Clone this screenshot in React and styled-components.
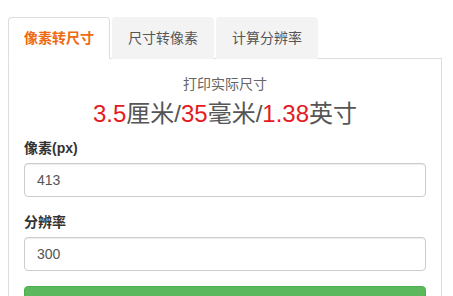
import React, { useState } from "react";
import styled, { createGlobalStyle } from "styled-components";

const GlobalStyle = createGlobalStyle`
  * { box-sizing: border-box; }
  body {
    margin: 0;
    background: #fff;
    font-family: "Liberation Sans", "Noto Sans CJK SC", Arial, sans-serif;
    font-size: 14px;
    line-height: 20px;
    color: #333;
  }
`;

const Page = styled.div`
  padding: 17px 11px 0 8px;
`;

const Tabs = styled.ul`
  display: flex;
  list-style: none;
  margin: 0;
  padding: 0;
  border-bottom: 1px solid #ddd;
`;

const TabItem = styled.li`
  margin: 0 2px -1px 0;
`;

const TabLink = styled.button`
  display: block;
  font: inherit;
  padding: 10px 15px;
  line-height: 20px;
  border: 1px solid ${(p) => (p.$active ? "#ddd" : "transparent")};
  border-bottom-color: ${(p) => (p.$active ? "#fff" : "transparent")};
  border-radius: 4px 4px 0 0;
  background: ${(p) => (p.$active ? "#fff" : "#f3f3f3")};
  color: ${(p) => (p.$active ? "#ee6a10" : "#555")};
  font-weight: ${(p) => (p.$active ? "bold" : "normal")};
  cursor: pointer;
`;

const Panel = styled.div`
  border: 1px solid #ddd;
  border-top: none;
  padding: 15px 15px 0;
  height: 238px;
`;

const Caption = styled.div`
  text-align: center;
  color: #666;
  margin-bottom: 3px;
`;

const Result = styled.div`
  text-align: center;
  font-size: 24px;
  line-height: 34px;
  color: #555;
  margin-bottom: 7px;
`;

const Num = styled.span`
  color: #e31b23;
`;

const FormGroup = styled.div`
  margin-bottom: 15px;
`;

const Label = styled.label`
  display: block;
  font-weight: bold;
  margin-bottom: 5px;
  color: #333;
`;

const Input = styled.input`
  display: block;
  width: 100%;
  height: 34px;
  padding: 6px 12px;
  font: inherit;
  color: #555;
  border: 1px solid #ccc;
  border-radius: 4px;
  box-shadow: inset 0 1px 1px rgba(0, 0, 0, 0.075);
  outline: none;
`;

const Submit = styled.button`
  display: block;
  width: 100%;
  height: 34px;
  border: 1px solid #4cae4c;
  border-radius: 4px;
  background: #5cb85c;
  color: #fff;
  font: inherit;
`;

const tabs = ["像素转尺寸", "尺寸转像素", "计算分辨率"];

const App = () => {
  const [active, setActive] = useState(0);
  const [px, setPx] = useState("413");
  const [dpi, setDpi] = useState("300");

  return (
    <>
      <GlobalStyle />
      <Page>
        <Tabs>
          {tabs.map((t, i) => (
            <TabItem key={t}>
              <TabLink $active={i === active} onClick={() => setActive(i)}>
                {t}
              </TabLink>
            </TabItem>
          ))}
        </Tabs>
        <Panel>
          <Caption>打印实际尺寸</Caption>
          <Result>
            <Num>3.5</Num>厘米/<Num>35</Num>毫米/<Num>1.38</Num>英寸
          </Result>
          <FormGroup>
            <Label htmlFor="px">像素(px)</Label>
            <Input id="px" value={px} onChange={(e) => setPx(e.target.value)} />
          </FormGroup>
          <FormGroup>
            <Label htmlFor="dpi">分辨率</Label>
            <Input id="dpi" value={dpi} onChange={(e) => setDpi(e.target.value)} />
          </FormGroup>
          <Submit type="button">计算</Submit>
        </Panel>
      </Page>
    </>
  );
};

export default App;
